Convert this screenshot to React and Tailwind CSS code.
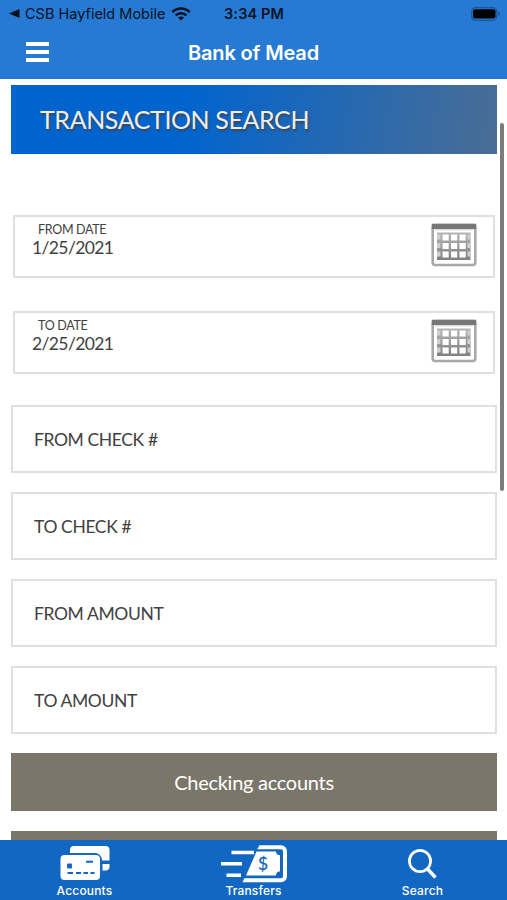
const checkFields = ['FROM CHECK #', 'TO CHECK #', 'FROM AMOUNT', 'TO AMOUNT']

const dateFields = [
  { label: 'FROM DATE', value: '1/25/2021' },
  { label: 'TO DATE', value: '2/25/2021' },
]

const tabs = [
  { label: 'Accounts', Icon: CardsIcon },
  { label: 'Transfers', Icon: TransferIcon },
  { label: 'Search', Icon: SearchIcon },
]

function WifiIcon() {
  return (
    <svg width="20" height="14" viewBox="0 0 20 14" fill="none" stroke="#06121f" strokeWidth="2.5">
      <path d="M1.3 5C6.2.2 13.8.2 18.7 5" />
      <path d="M4.6 8.3c3.1-2.9 7.7-2.9 10.8 0" />
      <path d="M7 10.5c1.8-1.5 4.2-1.5 6 0l-3 3z" fill="#06121f" stroke="none" />
    </svg>
  )
}

function BatteryIcon() {
  return (
    <svg width="30" height="14" viewBox="0 0 30 14">
      <rect x="0.7" y="0.7" width="25" height="12.6" rx="3.6" fill="none" stroke="#1a5595" strokeWidth="1.2" />
      <rect x="2" y="2.2" width="22.5" height="9.4" rx="2" fill="#000" />
      <path d="M27.2 4.8c2.2.8 2.2 3.6 0 4.4z" fill="#1a5595" />
    </svg>
  )
}

function CalendarIcon() {
  return (
    <svg width="46" height="44" viewBox="0 0 46 44">
      <defs>
        <linearGradient id="calGrid" x1="0" y1="0" x2="0" y2="1">
          <stop offset="0" stopColor="#b5b5b5" />
          <stop offset="1" stopColor="#808080" />
        </linearGradient>
      </defs>
      <rect x="1.7" y="2" width="42.6" height="40" rx="2.5" fill="#fff" stroke="#a8a8a8" strokeWidth="2.6" />
      <path d="M.8.8h44.400v5.200H.8z" fill="#777" />
      <path d="M4 6h38v1.500H4z" fill="#dcdcdc" />
      <path d="M6 9.500h33.500v27.500H6z" fill="url(#calGrid)" />
      <g fill="#fff">
        {[11.5, 20, 28.5].map((x) =>
          [11.5, 20, 28.5].map((y) => <rect key={`${x}-${y}`} x={x} y={y} width="6.2" height="6" />)
        )}
      </g>
      <g fill="#cfcfcf">
        {[11.5, 20, 28.5].map((y) => (
          <path key={y} d={`M6 ${y}h3.500v5H6zM36.500 ${y}h3v5h-3z`} />
        ))}
      </g>
    </svg>
  )
}

function CardsIcon() {
  return (
    <svg width="68" height="40" viewBox="0 0 68 40">
      <path
        d="M19 12V9a4 4 0 0 1 4-4h31.500a4 4 0 0 1 4 4v10.500h-7.500c0-5-3.500-7.500-7.500-7.500z"
        fill="#fff"
      />
      <path d="M51.500 23h7v2.500a4 4 0 0 1-4 4h-3z" fill="#fff" />
      <rect x="9.500" y="14" width="39.500" height="25" rx="4" fill="#fff" />
      <rect x="16" y="22.500" width="5" height="5" rx="1" fill="#1267c2" />
      <path d="M35 20.700h7M16.500 32h5.500M25 32h5M32.500 32h4.500M39.500 32h4" stroke="#1267c2" strokeWidth="2" />
    </svg>
  )
}

function TransferIcon() {
  return (
    <svg width="68" height="42" viewBox="0 0 68 42" className="-mb-[2px]">
      <path d="M11.500 11.500H34M1 22.800h21M6.500 34.200H21" stroke="#fff" strokeWidth="3.4" />
      <path
        d="M39.300 4.200H61a6 6 0 0 1 6 6v25a6 6 0 0 1-6 6H22.500l1.800-4H61a2 2 0 0 0 2-2v-25a2 2 0 0 0-2-2H37.300z"
        fill="#fff"
      />
      <path d="M36.500 10.500H56c0 2.200 1.500 3.600 4 3.800v16c-2.500.2-4 1.800-4 4.200H26z" fill="#fff" />
      <text
        x="43"
        y="29"
        textAnchor="middle"
        fill="#1267c2"
        fontSize="18"
        fontWeight="500"
        fontFamily="Lato, sans-serif"
      >
        $
      </text>
    </svg>
  )
}

function SearchIcon() {
  return (
    <svg width="68" height="40" viewBox="0 0 68 40" fill="none" stroke="#fff">
      <circle cx="31" cy="20" r="10.600" strokeWidth="2.700" />
      <path d="m38.500 28 8 8.500" strokeWidth="3.400" />
    </svg>
  )
}

function StatusBar() {
  return (
    <div className="flex h-[27px] items-center justify-between pr-[6px] pl-[9px] text-[14.5px] text-[#06121f]">
      <div className="flex w-[215px] items-center">
        <svg className="mr-[5px]" width="11" height="9" viewBox="0 0 11 9">
          <path d="M0 4.500 10.500 0v9z" fill="#06121f" />
        </svg>
        <span className="mr-[5px] w-[141px] pt-px whitespace-nowrap">CSB Hayfield Mobile</span>
        <WifiIcon />
      </div>
      <span className="flex-1 pt-px font-semibold tracking-[0.01em] whitespace-nowrap">3:34 PM</span>
      <BatteryIcon />
    </div>
  )
}

function DateField({ label, value }) {
  return (
    <div className="mx-[2px] flex h-[63px] justify-between border-2 border-[#e0e0e0] pr-[16px] pl-[17px]">
      <div className="pt-[6px] text-[#414141]">
        <p className="pl-[6px] text-[12.5px] leading-[14px] tracking-[-0.025em]">{label}</p>
        <p className="text-[17.5px] leading-[21px] tracking-[-0.035em]">{value}</p>
      </div>
      <div className="pt-[6px]">
        <CalendarIcon />
      </div>
    </div>
  )
}

export default function App() {
  return (
    <div className="flex h-[900px] w-[507px] flex-col overflow-hidden bg-white font-[Inter,sans-serif]">
      <header className="h-[79px] shrink-0 bg-[#267ad3]">
        <StatusBar />
        <div className="grid h-[50px] grid-cols-[1fr_auto_1fr] items-center">
          <button className="ml-[26px] flex w-[23px] flex-col gap-[4px]">
            <span className="h-[4px] w-full bg-white" />
            <span className="h-[4px] w-full bg-white" />
            <span className="h-[4px] w-full bg-white" />
          </button>
          <h1 className="pt-px text-[20px] font-semibold tracking-[-0.007em] whitespace-nowrap text-white">Bank of Mead</h1>
        </div>
      </header>

      <main className="relative min-h-0 flex-1 overflow-hidden px-[10px] pt-[6px] font-[Lato,sans-serif]">
        <div className="ml-px flex h-[69px] items-center bg-linear-[100deg,#0064cf_0%,#0064cf_35%,#4a6d94_100%] pl-[29px]">
          <h2 className="text-[25px] tracking-[-0.016em] text-[#eeeeee] [text-shadow:1px_2px_2px_#444]">
            TRANSACTION SEARCH
          </h2>
        </div>

        <div className="mt-[61px] ml-px flex flex-col gap-[33px]">
          {dateFields.map((field) => (
            <DateField key={field.label} {...field} />
          ))}
        </div>

        <div className="mt-[31px] ml-px flex flex-col gap-[19px]">
          {checkFields.map((label) => (
            <div
              key={label}
              className="flex h-[68px] items-center border-2 border-[#e0e0e0] pt-[3px] pl-[21px] text-[17.5px] tracking-[-0.022em] text-[#414141]"
            >
              {label}
            </div>
          ))}
        </div>

        <div className="mt-[19px] ml-px flex flex-col gap-[20px] text-[20px] tracking-[-0.014em] text-white">
          <button className="h-[58px] shrink-0 bg-[#7b766a]">Checking accounts</button>
          <button className="h-[58px] shrink-0 bg-[#7b766a]" />
        </div>

        <div className="absolute top-[44px] right-[3px] h-[368px] w-[4px] rounded-full bg-[#7d7d7d]" />
      </main>

      <nav className="grid h-[60px] shrink-0 grid-cols-3 bg-[#1267c2]">
        {tabs.map(({ label, Icon }) => (
          <button key={label} className="flex flex-col items-center pt-px text-white">
            <Icon />
            <span className="text-[12px] leading-[20px] font-medium tracking-[0.015em]">{label}</span>
          </button>
        ))}
      </nav>
    </div>
  )
}
